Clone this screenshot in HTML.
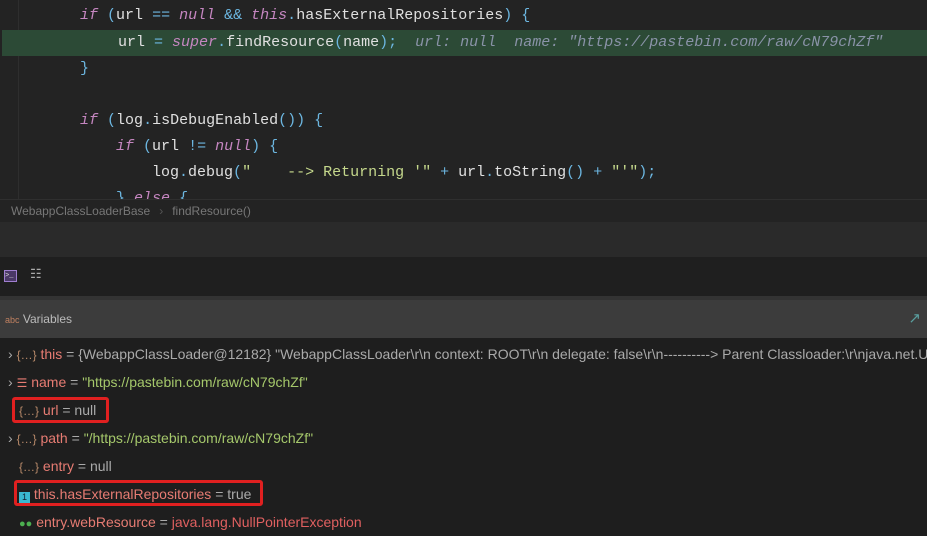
<!DOCTYPE html>
<html><head><meta charset="utf-8"><style>
body{margin:0;width:927px;height:534px;background:#1e1e1e;overflow:hidden;position:relative;font-family:"Liberation Sans",sans-serif}
.code{position:absolute;left:0;top:0;width:927px;height:199px;background:#232323;font-family:"Liberation Mono",monospace;font-size:15px;color:#e0e0e0}
.ln{position:absolute;left:0;height:26px;line-height:26px;white-space:pre;width:927px}
.k{color:#c586c0;font-style:italic}.p{color:#6cb6e0}.s{color:#c5d88c}.h{color:#8a93a8;font-style:italic}
.hl{background:#2c4a36}
.crumb{position:absolute;top:199px;left:0;width:927px;height:22px;background:#232323;border-top:1px solid #2f2f2f;font-size:12px;color:#777;line-height:22px}
.b2{position:absolute;top:222px;left:0;width:927px;height:35px;background:#2a2a2a}
.tb{position:absolute;top:257px;left:0;width:927px;height:39px;background:#1f1f1f}
.vh{position:absolute;top:296px;left:0;width:927px;height:42px;background:#3c3c3c;border-top:4px solid #333;box-sizing:border-box;font-size:12px;color:#bbb;line-height:38px}
.r{position:absolute;left:0;height:24px;line-height:24px;font-size:14px;white-space:nowrap;color:#aaa}
.n{color:#e77c73}.v{color:#aaa}.g{color:#a5c86b}.e{color:#e06060}
.br{color:#b88a6a;font-size:12px}
.box{position:absolute;border:3px solid #e02020;border-radius:3px}
.gut{position:absolute;left:0;top:0;width:18px;height:199px;border-right:1px solid #2e2e2e}
</style></head><body>
<div class="code">
<div class="gut"></div>
<div class="ln" style="top:3px;padding-left:80px"><span class="k">if</span> <span class="p">(</span>url <span class="p">==</span> <span class="k">null</span> <span class="p">&amp;&amp;</span> <span class="k">this</span><span class="p">.</span>hasExternalRepositories<span class="p">)</span> <span class="p">{</span></div>
<div class="ln hl" style="top:30px;padding-left:116px;left:2px">url <span class="p">=</span> <span class="k">super</span><span class="p">.</span>findResource<span class="p">(</span>name<span class="p">);</span>  <span class="h">url: null  name: "https://pastebin.com/raw/cN79chZf"</span></div>
<div class="ln" style="top:56px;padding-left:80px"><span class="p">}</span></div>
<div class="ln" style="top:108px;padding-left:80px"><span class="k">if</span> <span class="p">(</span>log<span class="p">.</span>isDebugEnabled<span class="p">()) {</span></div>
<div class="ln" style="top:134px;padding-left:116px"><span class="k">if</span> <span class="p">(</span>url <span class="p">!=</span> <span class="k">null</span><span class="p">) {</span></div>
<div class="ln" style="top:160px;padding-left:152px">log<span class="p">.</span>debug<span class="p">(</span><span class="s">"    --&gt; Returning '"</span> <span class="p">+</span> url<span class="p">.</span>toString<span class="p">()</span> <span class="p">+</span> <span class="s">"'"</span><span class="p">);</span></div>
<div class="ln" style="top:186px;padding-left:116px"><span class="p">}</span> <span class="k">else</span> <span class="p">{</span></div>
</div>
<div class="crumb"><span style="margin-left:11px">WebappClassLoaderBase</span><span style="margin:0 9px;color:#555">›</span>findResource()</div>
<div class="b2"></div>
<div class="tb">
<div style="position:absolute;left:4px;top:13px;width:11px;height:10px;border:1px solid #a07fd0;background:#4a3866;color:#ddd;font-size:7px;line-height:10px;font-family:'Liberation Mono',monospace">&gt;_</div>
<div style="position:absolute;left:30px;top:9px;color:#aaa;font-size:13px">☷</div>
</div>
<div class="vh"><span style="margin-left:5px;color:#c08060;font-size:9px">abc</span> Variables<span style="position:absolute;right:6px;color:#5aa0a0;font-size:15px">↗</span></div>
<div class="r" style="top:342px;left:8px">› <span class="br">{…}</span> <span class="n">this</span> = {WebappClassLoader@12182} "WebappClassLoader\r\n  context: ROOT\r\n  delegate: false\r\n----------&gt; Parent Classloader:\r\njava.net.U</div>
<div class="r" style="top:370px;left:8px">› <span class="br" style="color:#e77c73">☰</span> <span class="n">name</span> = <span class="g">"https://pastebin.com/raw/cN79chZf"</span></div>
<div class="r" style="top:398px;left:19px"><span class="br">{…}</span> <span class="n">url</span> = null</div>
<div class="r" style="top:426px;left:8px">› <span class="br">{…}</span> <span class="n">path</span> = <span class="g">"/https://pastebin.com/raw/cN79chZf"</span></div>
<div class="r" style="top:454px;left:19px"><span class="br">{…}</span> <span class="n">entry</span> = null</div>
<div class="r" style="top:482px;left:19px"><span style="display:inline-block;width:11px;height:11px;background:#3ab8d0;color:#123;font-size:9px;line-height:11px;text-align:center;vertical-align:-1px">1</span> <span class="n">this.hasExternalRepositories</span> = true</div>
<div class="r" style="top:510px;left:19px"><span style="color:#4caf50;font-size:11px">●●</span> <span class="n">entry.webResource</span> = <span class="e">java.lang.NullPointerException</span></div>
<div class="box" style="left:12px;top:397px;width:91px;height:20px"></div>
<div class="box" style="left:14px;top:480px;width:243px;height:20px"></div>
</body></html>
